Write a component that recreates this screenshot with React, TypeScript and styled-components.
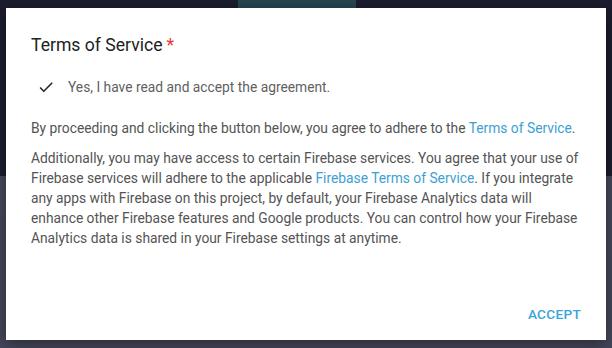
import React from "react";
import styled, { createGlobalStyle } from "styled-components";

const GlobalStyle = createGlobalStyle`
  html, body {
    margin: 0;
    padding: 0;
    width: 612px;
    height: 348px;
    overflow: hidden;
    font-family: Roboto, "Noto Sans", Arial, sans-serif;
  }
`;

const Backdrop = styled.div`
  position: relative;
  width: 612px;
  height: 348px;
  background: linear-gradient(to bottom, #1b1d2e 0, #1b1d2e 176px, #454859 176px, #44475a 100%);
  padding: 8px 6px;
  box-sizing: border-box;
`;

const TopTab = styled.div`
  position: absolute;
  top: 0;
  left: 238px;
  width: 118px;
  height: 8px;
  background: #264650;
`;

const Dialog = styled.div`
  position: relative;
  width: 600px;
  height: 332px;
  background: #fff;
  box-sizing: border-box;
  padding: 26px 23px 0 25px;
  display: flex;
  flex-direction: column;
  box-shadow: 0 4px 14px rgba(0, 0, 0, 0.4);
`;

const Title = styled.h2`
  margin: 0;
  font-size: 17.6px;
  font-weight: 400;
  color: #212121;
  line-height: 22px;
`;

const Required = styled.span`
  color: #e53935;
  margin-left: 4px;
`;

const CheckRow = styled.div`
  display: flex;
  align-items: center;
  margin: 21px 0 0 6px;
  gap: 13px;
  font-size: 13.8px;
  color: #5f5f5f;
  line-height: 20px;
`;

const Para = styled.p<{ $top: number }>`
  margin: ${({ $top }) => `${$top}px 0 0 0`};
  font-size: 13.8px;
  line-height: 20px;
  color: #545454;
`;

const Link = styled.a`
  color: #3d9fd3;
  text-decoration: none;
`;

const Actions = styled.div`
  margin-top: auto;
  display: flex;
  justify-content: flex-end;
  padding: 0 2px 18px 0;
`;

const AcceptButton = styled.button`
  border: none;
  background: none;
  font-family: Roboto, Arial, sans-serif;
  font-size: 13.6px;
  font-weight: 500;
  color: #39a4d8;
  letter-spacing: 0.3px;
  padding: 0;
  cursor: pointer;
`;

const Check = () => (
  <svg width="18" height="18" viewBox="0 0 24 24">
    <path d="M9 16.17L4.83 12l-1.42 1.41L9 19 21 7l-1.41-1.41z" fill="#212121" />
  </svg>
);

export default function App() {
  return (
    <>
      <GlobalStyle />
      <Backdrop>
        <TopTab />
        <Dialog>
          <Title>
            Terms of Service<Required>*</Required>
          </Title>
          <CheckRow>
            <Check />
            <span>Yes, I have read and accept the agreement.</span>
          </CheckRow>
          <Para $top={21}>
            By proceeding and clicking the button below, you agree to adhere to the{" "}
            <Link href="#">Terms of Service</Link>.
          </Para>
          <Para $top={10}>
            Additionally, you may have access to certain Firebase services. You agree that your use of
            Firebase services will adhere to the applicable <Link href="#">Firebase Terms of Service</Link>. If
            you integrate any apps with Firebase on this project, by default, your Firebase Analytics data will
            enhance other Firebase features and Google products. You can control how your Firebase Analytics data
            is shared in your Firebase settings at anytime.
          </Para>
          <Actions>
            <AcceptButton>ACCEPT</AcceptButton>
          </Actions>
        </Dialog>
      </Backdrop>
    </>
  );
}
